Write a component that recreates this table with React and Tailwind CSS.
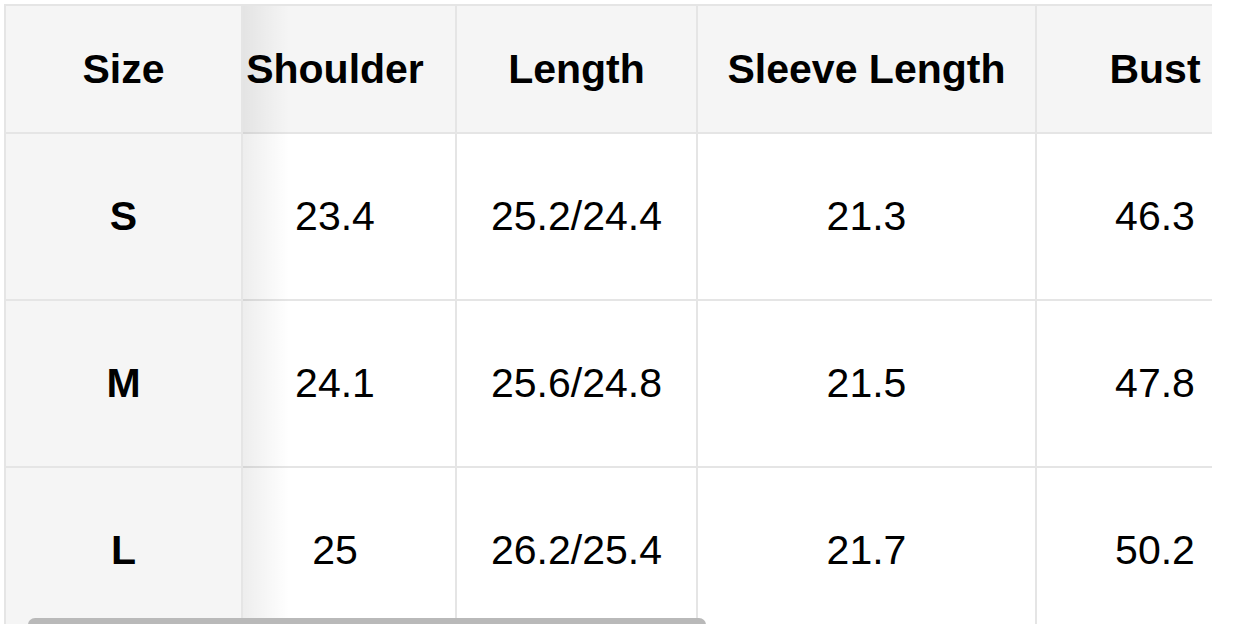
import React from "react";

const headers = ["Shoulder", "Length", "Sleeve Length", "Bust"];
const widths = ["w-[242px]", "w-[241px]", "w-[339px]", "w-[238px]"];
const rows = [
  { size: "S", vals: ["23.4", "25.2/24.4", "21.3", "46.3"] },
  { size: "M", vals: ["24.1", "25.6/24.8", "21.5", "47.8"] },
  { size: "L", vals: ["25", "26.2/25.4", "21.7", "50.2"] },
];

export default function App() {
  return (
    <div className="w-[1252px] h-[624px] overflow-hidden bg-white pl-[4px] pt-[4px] font-['Liberation_Sans',Arial,sans-serif] text-black text-[41px] leading-none">
      <div className="relative w-[1208px] h-[620px] overflow-hidden border-t-2 border-l-2 border-[#e5e5e5]">
        <div className="flex h-full">
          {/* sticky first column */}
          <div className="w-[237px] shrink-0 flex flex-col bg-[#f5f5f5] relative z-10">
            <div className="h-[128px] shrink-0 flex items-center justify-center border-r-2 border-b-2 border-[#e5e5e5] font-bold">
              Size
            </div>
            {rows.map((r) => (
              <div
                key={r.size}
                className="h-[167px] shrink-0 flex items-center justify-center border-r-2 border-b-2 border-[#e5e5e5] font-bold"
              >
                {r.size}
              </div>
            ))}
          </div>
          {/* scrolled area */}
          <div className="flex-1 overflow-hidden">
            <div className="-ml-[28px] w-max flex flex-col">
              <div className="flex bg-[#f5f5f5]">
                {headers.map((h, i) => (
                  <div
                    key={h}
                    className={`${widths[i]} h-[128px] shrink-0 flex items-center justify-center border-r-2 border-b-2 border-[#e5e5e5] font-bold whitespace-nowrap`}
                  >
                    {h}
                  </div>
                ))}
              </div>
              {rows.map((r) => (
                <div key={r.size} className="flex bg-white">
                  {r.vals.map((v, i) => (
                    <div
                      key={i}
                      className={`${widths[i]} h-[167px] shrink-0 flex items-center justify-center border-r-2 border-b-2 border-[#e5e5e5] whitespace-nowrap`}
                    >
                      {v}
                    </div>
                  ))}
                </div>
              ))}
            </div>
          </div>
        </div>
        {/* sticky column shadow */}
        <div className="absolute left-[237px] top-0 bottom-0 w-[46px] bg-linear-to-r from-[rgba(0,0,0,0.07)] to-transparent pointer-events-none z-20" />
        {/* scrollbar thumb */}
        <div className="absolute left-[22px] top-[612px] w-[678px] h-[14px] rounded-[7px] bg-[#b9b9b9] z-30" />
      </div>
    </div>
  );
}
